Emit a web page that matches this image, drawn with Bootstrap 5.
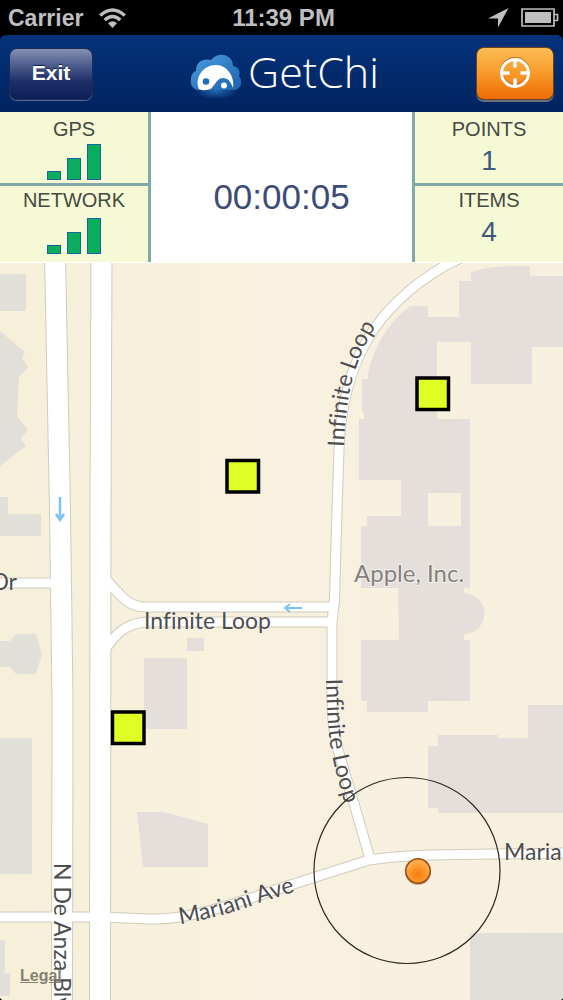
<!DOCTYPE html>
<html lang="en">
<head>
<meta charset="utf-8">
<meta name="viewport" content="width=device-width, initial-scale=1">
<title>GetChi</title>
<link href="https://cdn.jsdelivr.net/npm/bootstrap@5.3.0/dist/css/bootstrap.min.css" rel="stylesheet">
<style>
  body { background: #000; font-family: "Liberation Sans", Arial, sans-serif; }
  .status { height: 35px; color: #bfbfc1; font-size: 23px; line-height: 36px; background: #000; }
  .clock { font-size: 24px; }
  .side { flex: 1 1 0; }
  .topbar { height: 77px; background: linear-gradient(#04327b, #01245f); border-radius: 6px 6px 0 0; padding: 0 9px; }
  .exit-btn { width: 84px; height: 52px; border-radius: 8px; border: 1px solid #1d2c55; color: #fff; font-size: 21px; font-weight: 700; line-height: 24px; padding: 0 0 2px;
    background: linear-gradient(#8490b2, #4a5a8a 35%, #1d2f68 65%, #0c1f58); box-shadow: 0 1px 0 #5468a0; text-shadow: 0 -1px 1px #10204a; }
  .target-btn { width: 78px; height: 53px; border-radius: 8px; border: 1px solid #70441a; background: linear-gradient(#fbbd54, #f8992a 50%, #ef6c04); box-shadow: 0 2px 0 #67717f; }
  .brand { font-family: "Open Sans", "Noto Sans", sans-serif; font-weight: 300; font-size: 43px; line-height: 52px; padding-bottom: 4px; color: #fff; }
  .stats { height: 150px; background: #fff; }
  .panel { width: 151px; background: #f6f9d6; color: #454a40; font-size: 20px; line-height: 24px; }
  .panel-start { border-right: 3px solid #81a9a8; }
  .panel-end { border-left: 3px solid #81a9a8; }
  .cell { height: 74px; padding-top: 5px; }
  .cell-top { border-bottom: 3px solid #81a9a8; }
  .cell-low { padding-top: 2px; }
  .count { font-size: 28px; line-height: 40px; color: #3f5a80; }
  .timer { font-size: 35px; color: #3b4c76; padding-top: 20px; }
  .bars { gap: 6px; height: 36px; margin-top: 3px; }
  .cell-low .bars { margin-top: 6px; }
  .bars span { width: 14px; background: #09ad5c; border: 1px solid #1664a4; }
  .bar-s { height: 9px; } .bar-m { height: 22px; } .bar-l { height: 36px; }
  .map { background: #f8f1df; border-radius: 0 0 4px 4px; border-top: 1px solid #fff; }
  .map svg { flex: 1 1 0; min-height: 400px; }
  .legal { position: absolute; left: 20px; bottom: 14px; font-size: 16px; font-weight: 700; line-height: 20px; color: #85806f; }
  .street { font: 23px Lato, sans-serif; font-variant-ligatures: none; fill: #504e4c; paint-order: stroke; stroke: #fff; stroke-width: 1px; stroke-opacity: .6; }
  .place { font: 24px Lato, sans-serif; fill: #85817b; paint-order: stroke; stroke: #f4f0ec; stroke-width: 2px; }
</style>
</head>
<body class="min-vh-100 d-flex flex-column">
<header>
  <div class="status d-flex fw-bold">
    <div class="side d-flex align-items-center ps-2">Carrier
      <svg class="ms-3" width="27" height="20" viewBox="0 0 27 20" fill="none" stroke="#bfbfc1" stroke-width="3.4" aria-hidden="true"><path d="M1.2 7.5Q13.5-3.5 25.8 7.5M5.7 12Q13.5 5 21.3 12"/><path d="M9 15.3Q13.5 11 18 15.3L13.5 20Z" fill="#bfbfc1" stroke="none"/></svg>
    </div>
    <div class="clock">11:39 PM</div>
    <div class="side d-flex align-items-center justify-content-end gap-2 pe-1">
      <svg width="21" height="20" viewBox="0 0 21 20" aria-hidden="true"><path d="M20.5 0L10 19.5V10.5H0Z" fill="#bfbfc1"/></svg>
      <svg class="ms-1" width="38" height="19" viewBox="0 0 38 19" aria-hidden="true"><path d="M1 1H33V18H1ZM33 6.5H36.5V12.5H33" fill="none" stroke="#bfbfc1" stroke-width="1.7"/><path d="M4 4H30V15H4Z" fill="#bfbfc1"/></svg>
    </div>
  </div>
  <nav class="topbar d-flex align-items-center justify-content-between" aria-label="Main">
    <button type="button" class="btn exit-btn">Exit</button>
    <div class="d-flex align-items-center gap-1">
      <svg width="54" height="52" viewBox="0 0 54 52" aria-hidden="true">
        <defs>
          <linearGradient id="cloud" x1="0" y1="0" x2="1" y2="1"><stop offset="0" stop-color="#4ca0e0"/><stop offset=".5" stop-color="#337fc6"/><stop offset="1" stop-color="#1c61ac"/></linearGradient>
          <radialGradient id="glow"><stop offset="0" stop-color="#2877c2" stop-opacity=".8"/><stop offset="1" stop-color="#2877c2" stop-opacity="0"/></radialGradient>
        </defs>
        <ellipse cx="26" cy="43" rx="22" ry="8" fill="url(#glow)"/>
        <path d="M8 42C2 41 0 36 1 31C1 27 3 24 6 23C6 13 14 10 21 12C28 3 43 6 43 18C48 19 51 23 49 28C54 34 50 42 44 42Z" fill="url(#cloud)"/>
        <path d="M9 41C4 30 13 17 26 17C38 17 45 30 43 40C41 34 38 30 33 30C25 30 25 42 16 42Q12 43 9 41Z" fill="#fff"/>
        <circle cx="16" cy="33.500" r="3.300" fill="#216db8"/><circle cx="34" cy="37.500" r="3" fill="#fff"/>
      </svg>
      <div class="brand">GetChi</div>
    </div>
    <button type="button" class="btn target-btn p-0 d-flex align-items-center justify-content-center" aria-label="Locate me">
      <svg width="34" height="34" viewBox="0 0 34 34" fill="none" aria-hidden="true">
        <circle cx="17" cy="15" r="13.500" stroke="#965012" stroke-opacity=".65" stroke-width="3"/><circle cx="17" cy="16" r="13.500" stroke="#fff" stroke-width="3"/><path d="M17 3v7.500M17 21.500V29M4 16h7.500M22.500 16H30" stroke="#fff" stroke-width="3.500"/>
      </svg>
    </button>
  </nav>
</header>
<section class="stats d-flex text-center">
  <div class="panel panel-start">
    <div class="cell cell-top">GPS
      <div class="bars d-flex align-items-end justify-content-center"><span class="bar-s"></span><span class="bar-m"></span><span class="bar-l"></span></div>
    </div>
    <div class="cell cell-low">NETWORK
      <div class="bars d-flex align-items-end justify-content-center"><span class="bar-s"></span><span class="bar-m"></span><span class="bar-l"></span></div>
    </div>
  </div>
  <div class="timer flex-grow-1 d-flex align-items-center justify-content-center">00:00:05</div>
  <div class="panel panel-end">
    <div class="cell cell-top">POINTS<div class="count">1</div></div>
    <div class="cell cell-low">ITEMS<div class="count">4</div></div>
  </div>
</section>
<main class="map flex-grow-1 d-flex flex-column position-relative overflow-hidden">
  <svg class="w-100" viewBox="0 263 563 737" preserveAspectRatio="xMidYMin slice" role="img" aria-label="Map of Infinite Loop">
    <defs>
      <linearGradient id="ground"><stop offset="0" stop-color="#f6f0da"/><stop offset=".5" stop-color="#f8f1df"/><stop offset="1" stop-color="#f8f0de"/></linearGradient>
      <radialGradient id="pin" cy=".65"><stop offset="0" stop-color="#f47c08"/><stop offset=".6" stop-color="#fb952b"/><stop offset="1" stop-color="#ffa94a"/></radialGradient>
      <g id="wide" fill="none"><path d="M55 255L60 510L62.500 700L62 1010"/><path d="M101.500 255L100.500 510L100 1010"/></g>
      <g id="narrow" fill="none" stroke-linejoin="round">
        <path d="M470 254C425 272 385 307 366 342C345 380 340 420 339 450L337 510L334.500 600L332 622V680C331 715 334 735 338 750L353 800L370 859"/>
        <path d="M335 607H145C128 607 120 595 104 577"/><path d="M332 622H150C125 622 115 635 104 651"/>
        <path d="M-5 583H58"/><path d="M-5 917H100L150 919C190 920 230 905 281 888L369 860Q395 856 430 855L570 853"/>
      </g>
      <path id="loop-up" d="M344 447C345 420 348 395 353 378C358 360 365 343 382 316"/>
      <path id="loop-down" d="M326 679C327 710 328 735 332 755C336 775 341 790 349 818"/>
      <path id="mariani" d="M180 924Q220 918 262 902L320 884"/>
      <path id="anza" d="M54 863V1100"/>
    </defs>
    <rect y="255" width="563" height="750" fill="url(#ground)"/>
    <g fill="#e4dfda">
      <path fill="#e2dfd9" d="M0 274H26V311H0ZM0 331L25 352L22 358L28 367L19 377L17 417L28 429L21 439L26 446L0 466ZM0 497H8V514H41V536H0ZM0 641H10L16 634H36L42 654L36 674H16L10 667H0ZM0 738H32V874H0ZM0 940H5V973H10V996H0ZM470 933H563V1000H470Z"/>
      <path d="M187 638H204V651H187ZM144 658H187V729H144ZM137 812H164L208 824V867H143Z"/>
      <path fill-rule="evenodd" d="M471 272Q490 266 511 266H530V276H563V347H532V384H471V342H437V419H470V588H464V593A20.500 20.500 0 0 1 464 634V640H470V701H428V712H367V701H361V640H399L398 588H361V526H367V516H401V480H359V419H364V412H362V379H368V373Q378 330 410 306H428V317H459V281H471ZM428 493V526H461V493Z"/>
      <path d="M528 705H563V813H438V808H428V746H438V735H498V738H528Z"/>
    </g>
    <use href="#wide" stroke="#d0cbbb" stroke-width="22"/>
    <use href="#narrow" stroke="#d0cbbb" stroke-width="11"/>
    <use href="#wide" stroke="#fff" stroke-width="20"/>
    <use href="#narrow" stroke="#fff" stroke-width="9"/>
    <g fill="none" stroke="#7cc4f5" stroke-width="2.500"><path d="M60 497V519M56 514L60 520L64 514"/><path d="M302 608H285M290 604L285 608L290 612" stroke-width="2"/></g>
    <g class="street">
      <text x="144" y="629">Infinite Loop</text>
      <text x="17" y="590" text-anchor="end">Dr</text>
      <text x="504" y="860">Maria</text>
      <text><textPath href="#loop-up">Infinite Loop</textPath></text>
      <text><textPath href="#loop-down">Infinite Loop</textPath></text>
      <text><textPath href="#mariani">Mariani Ave</textPath></text>
      <text><textPath href="#anza">N De Anza Blvd</textPath></text>
    </g>
    <text class="place" x="354" y="582">Apple, Inc.</text>
    <g fill="#dfff24" stroke="#000" stroke-width="3.500">
      <rect x="227" y="460.500" width="31.500" height="31.500"/><rect x="417" y="378" width="31.500" height="31.500"/><rect x="112.500" y="712" width="31.500" height="31.500"/>
    </g>
    <circle cx="407" cy="870.500" r="93" fill="none" stroke="#2b2721" stroke-width="1.200"/>
    <circle cx="418" cy="872" r="13" fill="#8a6a48" fill-opacity=".5"/>
    <circle cx="418" cy="871" r="12.200" fill="url(#pin)" stroke="#9b4a0c" stroke-width="1.500"/>
  </svg>
  <a class="legal" href="#legal">Legal</a>
</main>
<script src="https://cdn.jsdelivr.net/npm/bootstrap@5.3.0/dist/js/bootstrap.bundle.min.js"></script>
</body>
</html>
